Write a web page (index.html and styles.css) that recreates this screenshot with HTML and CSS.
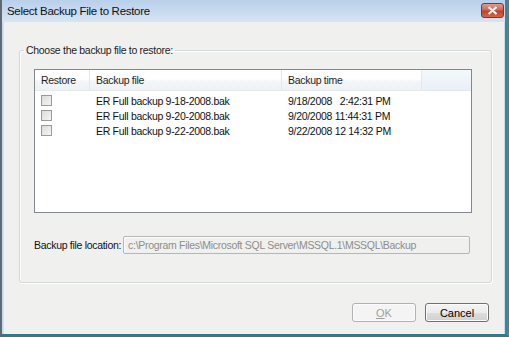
FILE: index.html
```html
<!DOCTYPE html>
<html lang="en">
<head>
    <meta charset="UTF-8">
    <title>Select Backup File to Restore</title>
    <link rel="stylesheet" href="styles.css">
</head>
<body>
    <div class="window">
        <div class="title-bar">
            <span class="title">Select Backup File to Restore</span>
            <button class="close-btn" aria-label="Close">
                <svg width="11" height="9" viewBox="0 0 11 9">
                    <path d="M1.5 1 L9.5 8 M9.5 1 L1.5 8" stroke="#fff" stroke-width="2.2" fill="none"/>
                </svg>
            </button>
        </div>

        <div class="client">
            <fieldset class="group">
                <legend>Choose the backup file to restore:</legend>

                <div class="list-view">
                    <div class="list-header">
                        <div class="col col-restore">Restore</div>
                        <div class="col col-file">Backup file</div>
                        <div class="col col-time">Backup time</div>
                        <div class="col col-fill"></div>
                    </div>
                    <div class="list-row">
                        <div class="col col-restore"><span class="check"></span></div>
                        <div class="col col-file">ER Full backup 9-18-2008.bak</div>
                        <div class="col col-time">9/18/2008&nbsp;&nbsp;&nbsp;2:42:31 PM</div>
                    </div>
                    <div class="list-row">
                        <div class="col col-restore"><span class="check"></span></div>
                        <div class="col col-file">ER Full backup 9-20-2008.bak</div>
                        <div class="col col-time">9/20/2008 11:44:31 PM</div>
                    </div>
                    <div class="list-row">
                        <div class="col col-restore"><span class="check"></span></div>
                        <div class="col col-file">ER Full backup 9-22-2008.bak</div>
                        <div class="col col-time">9/22/2008 12 14:32 PM</div>
                    </div>
                </div>

                <div class="location">
                    <label for="loc">Backup file location:</label>
                    <input id="loc" type="text" value="c:\Program Files\Microsoft SQL Server\MSSQL.1\MSSQL\Backup" disabled>
                </div>
            </fieldset>

            <div class="buttons">
                <button class="btn" disabled><u>O</u>K</button>
                <button class="btn">Cancel</button>
            </div>
        </div>
    </div>
</body>
</html>
```

FILE: styles.css
```css
* {
    margin: 0;
    padding: 0;
    box-sizing: border-box;
}

body {
    width: 509px;
    height: 337px;
    overflow: hidden;
    font-family: "Liberation Sans", Arial, sans-serif;
    font-size: 10.5px;
    letter-spacing: -0.3px;
    color: #000;
    background: #f0f0ee;
}

.window {
    width: 509px;
    height: 337px;
    display: flex;
    flex-direction: column;
    border-left: 2px solid #5e6a74;
    border-right: 4px solid #2a8ea4;
    border-bottom: 3px solid #1f7f94;
    background: #c8dbee;
}

.title-bar {
    height: 22px;
    flex: none;
    display: flex;
    align-items: center;
    justify-content: space-between;
    padding: 0 1px 0 5px;
    background: linear-gradient(to bottom, #b9d0ea 0%, #cadcef 60%, #d7e5f3 100%);
}

.title {
    font-size: 11.5px;
    letter-spacing: -0.3px;
    color: #111;
}

.close-btn {
    width: 23px;
    height: 15px;
    margin-top: -2px;
    border: 1px solid #7a3a30;
    border-radius: 3px;
    background: linear-gradient(to bottom, #e49a8c 0%, #d26650 45%, #c0412b 55%, #d0674f 100%);
    display: flex;
    align-items: center;
    justify-content: center;
}

.client {
    flex: 1;
    display: flex;
    flex-direction: column;
    margin-left: 1px;
    margin-right: 1px;
    background: #f0f0ee;
    border-left: 1px solid #dcdcdc;
    padding: 22px 0 0 15px;
}

.group {
    width: 473px;
    height: 239px;
    border: 1px solid #d3d8db;
    border-radius: 3px;
    box-shadow: inset 1px 1px 0 #fff, 1px 1px 0 #fff;
    padding: 0 0 0 14px;
}

.group legend {
    margin-left: -10px;
    padding: 0 2px;
    color: #1c1c1c;
}

.list-view {
    width: 438px;
    height: 144px;
    margin-top: 13px;
    background: #fff;
    border: 1px solid #828790;
}

.list-header {
    display: flex;
    height: 21px;
    background: linear-gradient(to bottom, #ffffff 0%, #ffffff 45%, #f3f5f8 55%, #eef2f6 100%);
    border-bottom: 1px solid #e5e8ec;
}

.list-header .col {
    display: flex;
    align-items: center;
    border-right: 1px solid #e3e6ea;
    color: #1e1e1e;
}

.list-header .col-fill {
    flex: 1;
    border-right: none;
    background: linear-gradient(to bottom, #f4f8fb, #e9f0f7);
}

.col {
    padding-left: 6px;
    white-space: nowrap;
}

.col-restore {
    width: 55px;
}

.col-file {
    width: 192px;
}

.col-time {
    width: 140px;
}

.list-row {
    display: flex;
    align-items: center;
    height: 15px;
    color: #111;
}

.list-header + .list-row {
    margin-top: 2px;
}

.check {
    display: block;
    width: 11px;
    height: 11px;
    border: 1px solid #9a9a9a;
    background: linear-gradient(135deg, #dcdcdc, #f4f4f4);
}

.location {
    display: flex;
    align-items: center;
    margin-top: 23px;
    gap: 2px;
}

.location label {
    color: #111;
}

.location input {
    width: 347px;
    height: 18px;
    padding: 0 4px;
    font-family: "Liberation Sans", Arial, sans-serif;
    font-size: 10.5px;
    letter-spacing: -0.3px;
    color: #8d8d8d;
    background: #f0f0ee;
    border: 1px solid #b5b5b5;
    border-radius: 2px;
    box-shadow: inset 1px 1px 0 #fff;
}

.buttons {
    display: flex;
    justify-content: flex-end;
    gap: 9px;
    margin-top: 20px;
    padding-right: 15px;
}

.btn {
    width: 64px;
    height: 19px;
    font-family: "Liberation Sans", Arial, sans-serif;
    font-size: 11px;
    color: #000;
    border: 1px solid #707070;
    border-radius: 3px;
    background: linear-gradient(to bottom, #f4f4f4 0%, #ebebeb 50%, #dddddd 51%, #d0d0d0 100%);
    box-shadow: inset 0 0 0 1px #fbfbfb;
}

.btn:disabled {
    color: #a0a0a0;
    border-color: #adb2b5;
    background: #f4f4f4;
}
```
